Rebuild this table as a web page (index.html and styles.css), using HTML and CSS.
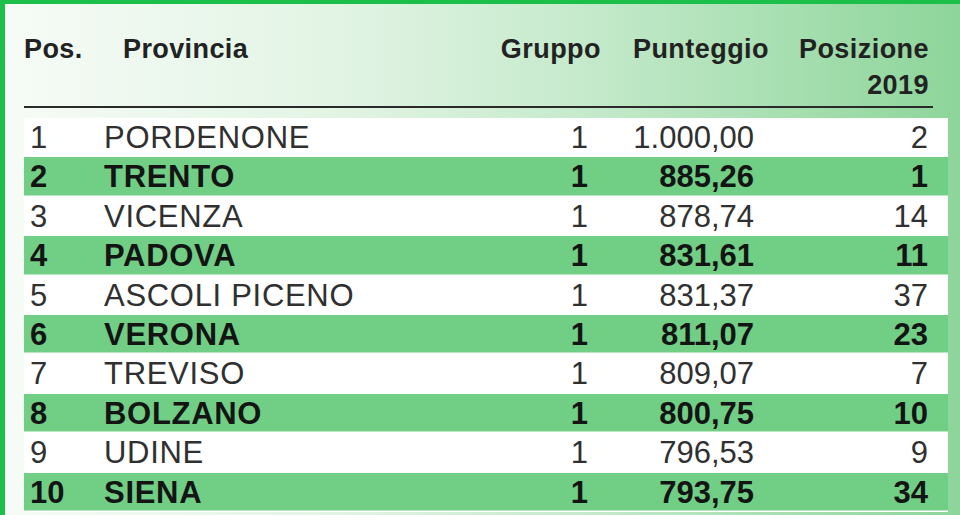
FILE: index.html
```html
<!DOCTYPE html>
<html lang="it">
<head>
<meta charset="utf-8">
<title>Classifica province</title>
<link rel="stylesheet" href="styles.css">
</head>
<body>
<div class="frame">
  <div class="head">
    <div class="h pos">Pos.</div>
    <div class="h prov">Provincia</div>
    <div class="h num grp">Gruppo</div>
    <div class="h num pun">Punteggio</div>
    <div class="h num p19">Posizione<br>2019</div>
    <div></div>
  </div>
  <div class="rows">
    <div class="row"><div class="c pos">1</div><div class="c prov">PORDENONE</div><div class="c num grp">1</div><div class="c num pun">1.000,00</div><div class="c num p19">2</div><div></div></div>
    <div class="row hl"><div class="c pos">2</div><div class="c prov">TRENTO</div><div class="c num grp">1</div><div class="c num pun">885,26</div><div class="c num p19">1</div><div></div></div>
    <div class="row"><div class="c pos">3</div><div class="c prov">VICENZA</div><div class="c num grp">1</div><div class="c num pun">878,74</div><div class="c num p19">14</div><div></div></div>
    <div class="row hl"><div class="c pos">4</div><div class="c prov">PADOVA</div><div class="c num grp">1</div><div class="c num pun">831,61</div><div class="c num p19">11</div><div></div></div>
    <div class="row"><div class="c pos">5</div><div class="c prov">ASCOLI PICENO</div><div class="c num grp">1</div><div class="c num pun">831,37</div><div class="c num p19">37</div><div></div></div>
    <div class="row hl"><div class="c pos">6</div><div class="c prov">VERONA</div><div class="c num grp">1</div><div class="c num pun">811,07</div><div class="c num p19">23</div><div></div></div>
    <div class="row"><div class="c pos">7</div><div class="c prov">TREVISO</div><div class="c num grp">1</div><div class="c num pun">809,07</div><div class="c num p19">7</div><div></div></div>
    <div class="row hl"><div class="c pos">8</div><div class="c prov">BOLZANO</div><div class="c num grp">1</div><div class="c num pun">800,75</div><div class="c num p19">10</div><div></div></div>
    <div class="row"><div class="c pos">9</div><div class="c prov">UDINE</div><div class="c num grp">1</div><div class="c num pun">796,53</div><div class="c num p19">9</div><div></div></div>
    <div class="row hl"><div class="c pos">10</div><div class="c prov">SIENA</div><div class="c num grp">1</div><div class="c num pun">793,75</div><div class="c num p19">34</div><div></div></div>
  </div>
</div>
</body>
</html>
```

FILE: styles.css
```css
html, body {
  margin: 0;
  padding: 0;
  overflow: hidden;
}
body {
  width: 960px;
  height: 515px;
  font-family: "Liberation Sans", Arial, sans-serif;
}
.frame {
  box-sizing: border-box;
  width: 960px;
  height: 515px;
  border-top: 4px solid #1cbf4a;
  border-left: 5px solid #1cbf4a;
  padding: 27px 0 0 19px;
  background: linear-gradient(to right, #f6fbf6 0%, #e2f4e4 35%, #c6eacc 60%, #8dd59a 100%);
}
.head {
  display: grid;
  grid-template-columns: 80px 367px 130px 168px 160px 1fr;
  width: 909px;
  height: 75px;
  border-bottom: 2px solid #2a2a2a;
  font-size: 27px;
  line-height: 36px;
  font-weight: bold;
  color: #222222;
  letter-spacing: 0.4px;
}
.h.prov { padding-left: 19px; }
.h.num { letter-spacing: 0.45px; }
.num { text-align: right; }
.rows {
  margin-top: 10px;
  width: 924px;
}
.row {
  display: grid;
  grid-template-columns: 80px 367px 130px 168px 160px 1fr;
  height: 39.4px;
  line-height: 39.4px;
  font-size: 31px;
  color: #303030;
  background: #ffffff;
}
.row.hl {
  background: #70cf85;
  box-shadow: inset 0 -1.5px 0 #ffffff;
  font-weight: bold;
  color: #141414;
}
.c.pos { padding-left: 6px; }
.c.prov { letter-spacing: 0.7px; }
.c.grp { padding-right: 13px; }
.c.pun { padding-right: 15px; }
.c.p19 { padding-right: 1px; }
```
